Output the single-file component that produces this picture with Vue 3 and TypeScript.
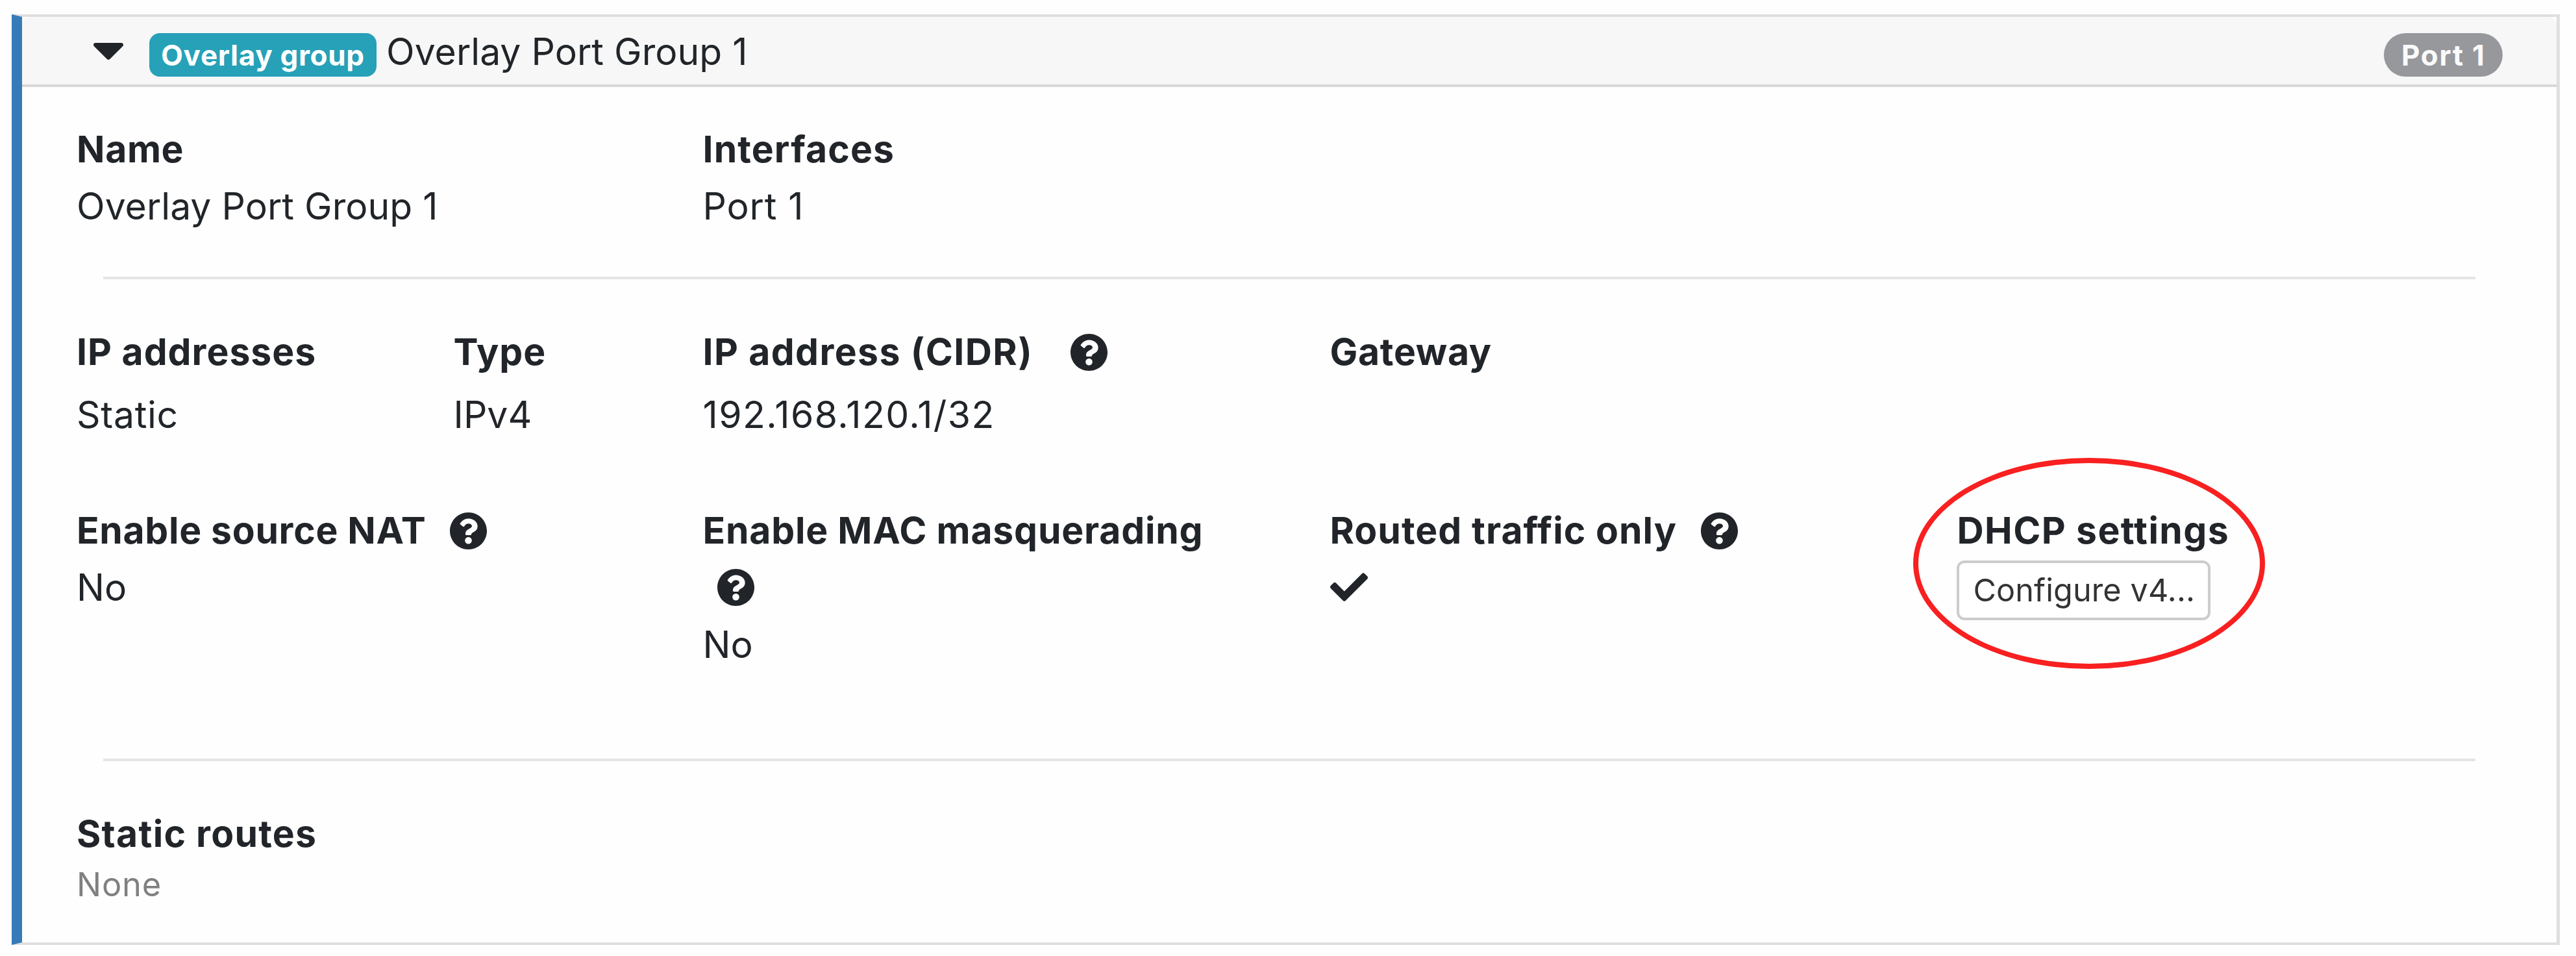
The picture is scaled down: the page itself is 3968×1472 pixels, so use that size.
<script setup lang="ts">
interface Field {
  label: string
  labelTracking: number
  value?: string
  valueTracking?: number
  help?: 'wide' | 'near' | 'below'
  kind?: 'check' | 'button'
}

const identity: Field[] = [
  { label: 'Name', labelTracking: 0.68, value: 'Overlay Port Group 1', valueTracking: 0.05 },
  { label: 'Interfaces', labelTracking: 1.14, value: 'Port 1', valueTracking: 0.9 },
]

const addressing: Field[] = [
  { label: 'IP addresses', labelTracking: 1.03, value: 'Static', valueTracking: 0.71 },
  { label: 'Type', labelTracking: 0.99, value: 'IPv4', valueTracking: 0.08 },
  { label: 'IP address (CIDR)', labelTracking: 1.43, value: '192.168.120.1/32', valueTracking: 1.49, help: 'wide' },
  { label: 'Gateway', labelTracking: 0.75 },
]

const options: Field[] = [
  { label: 'Enable source NAT', labelTracking: 0.72, value: 'No', valueTracking: 0.06, help: 'near' },
  { label: 'Enable MAC masquerading', labelTracking: 0.83, value: 'No', valueTracking: 0.06, help: 'below' },
  { label: 'Routed traffic only', labelTracking: 1.08, help: 'near', kind: 'check' },
  { label: 'DHCP settings', labelTracking: 1.44, value: 'Configure v4...', kind: 'button' },
]

const rows = [
  { name: 'identity', fields: identity },
  { name: 'addressing', fields: addressing },
  { name: 'options', fields: options },
]

const track = (n?: number) => ({ letterSpacing: `${n ?? 0}px` })

const helpPath =
  'M504 256c0 136.997-111.043 248-248 248S8 392.997 8 256C8 119.083 119.043 8 256 8s248 111.083 248 248zM262.655 90c-54.497 0-89.255 22.957-116.549 63.758-3.536 5.286-2.353 12.415 2.715 16.258l34.699 26.31c5.205 3.947 12.621 3.008 16.665-2.122 17.864-22.658 30.113-35.797 57.303-35.797 20.429 0 45.698 13.148 45.698 32.958 0 14.976-12.363 22.667-32.534 33.976C247.128 238.528 216 254.941 216 296v4c0 6.627 5.373 12 12 12h56c6.627 0 12-5.373 12-12v-1.333c0-28.462 83.186-29.647 83.186-106.667 0-58.002-60.165-102-116.531-102zM256 338c-25.365 0-46 20.635-46 46 0 25.364 20.635 46 46 46s46-20.636 46-46c0-25.365-20.635-46-46-46z'
</script>

<template>
  <main class="page">
    <section class="card">
      <header class="card-header">
        <svg class="caret" viewBox="11.4 192 297.2 168.6" preserveAspectRatio="none">
          <path d="M31.3 192h257.3c17.8 0 26.7 21.5 14.1 34.1L174.1 354.7c-7.8 7.8-20.5 7.8-28.3 0L17.2 226.1C4.6 213.5 13.5 192 31.3 192z" />
        </svg>
        <span class="badge">Overlay group</span>
        <span class="title">Overlay Port Group 1</span>
        <span class="pill">Port 1</span>
      </header>

      <div class="card-body">
        <template v-for="row in rows" :key="row.name">
          <div class="row" :class="row.name">
            <div v-for="f in row.fields" :key="f.label" class="field">
              <div class="label" :class="f.help">
                <span :style="track(f.labelTracking)">{{ f.label }}</span>
                <svg v-if="f.help" class="help" viewBox="8 8 496 496"><path :d="helpPath" /></svg>
              </div>
              <div v-if="f.kind === 'check'" class="value">
                <svg class="check" viewBox="0 65 512 382">
                  <path d="M173.898 439.404l-166.4-166.4c-9.997-9.997-9.997-26.206 0-36.204l36.203-36.204c9.997-9.998 26.207-9.998 36.204 0L192 312.69 432.095 72.596c9.997-9.997 26.207-9.997 36.204 0l36.203 36.204c9.997 9.997 9.997 26.206 0 36.204l-294.4 294.401c-9.998 9.997-26.207 9.997-36.204-.001z" />
                </svg>
              </div>
              <template v-else-if="f.kind === 'button'">
                <button class="configure" type="button">{{ f.value }}</button>
                <span class="ring"></span>
              </template>
              <div v-else-if="f.value" class="value" :style="track(f.valueTracking)">{{ f.value }}</div>
            </div>
          </div>
          <hr v-if="row.name !== 'addressing'" class="rule" />
        </template>

        <div class="routes">
          <div class="label"><span :style="track(1.3)">Static routes</span></div>
          <div class="none">None</div>
        </div>
      </div>
    </section>
  </main>
</template>

<style>
body {
  background: #fefefe;
}
</style>

<style scoped>
.page {
  box-sizing: border-box;
  width: 3968px;
  height: 1472px;
  padding: 22px 25px 17px 18px;
  background: #fefefe;
  color: #212529;
  font-family: Inter, "Liberation Sans", sans-serif;
  font-size: 57px;
  line-height: 88px;
  white-space: nowrap;
  overflow: hidden;
}

.page svg {
  display: block;
  flex: none;
  fill: currentColor;
}

.card {
  box-sizing: border-box;
  height: 1433px;
  border: solid #dfdfdf;
  border-width: 4px 5px 4px 16px;
  border-left-color: #367bb7;
}

.card-header {
  display: flex;
  align-items: flex-start;
  height: 104px;
  padding: 0 83px 0 110px;
  border-bottom: 4px solid #d8d8d8;
  border-radius: 10px 10px 0 0;
  background: #f7f7f7;
}

.caret {
  width: 46px;
  height: 26px;
  margin: 40px 40px 0 0;
}

.badge,
.pill {
  box-sizing: border-box;
  height: 67px;
  margin-top: 25px;
  padding-top: 1px;
  color: #fff;
  font-size: 44px;
  font-weight: 700;
  line-height: 66px;
}

.badge {
  width: 350px;
  padding-left: 18px;
  border-radius: 16px;
  background: #26a1b8;
  letter-spacing: 0.7px;
}

.title {
  margin: 10px 0 0 15px;
  letter-spacing: 0.05px;
}

.pill {
  width: 183px;
  margin-left: auto;
  padding-left: 27px;
  border-radius: 34px;
  background: #96989b;
  color: #fafafa;
  letter-spacing: 1.7px;
}

.card-body {
  padding: 52px 0 0 84px;
}

.row {
  display: grid;
  grid-template-columns: 964.5px 966px 966px 1fr;
  align-items: start;
}

.identity {
  height: 240px;
}

.addressing {
  grid-template-columns: 580.5px 384px 966px 1fr;
  height: 275px;
  padding-top: 68px;
}

.addressing .value {
  margin-top: 9px;
}

.options {
  height: 395px;
}

.field {
  position: relative;
}

.label {
  display: flex;
  align-items: center;
  min-height: 88px;
  font-weight: 700;
}

.help {
  width: 57px;
  height: 57px;
  margin-left: 37px;
}

.wide .help {
  margin-left: 58px;
}

.below {
  flex-direction: column;
  align-items: flex-start;
}

.below .help {
  margin: 15px 0 16px 22px;
}

.value {
  height: 88px;
}

.check {
  width: 58px;
  height: 44px;
  padding-top: 21px;
}

.configure {
  display: block;
  box-sizing: border-box;
  width: 391px;
  height: 92px;
  margin: 2px 0 0 -1px;
  padding: 0 0 0 22px;
  border: 4px solid #ccc;
  border-radius: 12px;
  background: #fff;
  color: #333;
  font-family: inherit;
  font-size: 48.5px;
  line-height: 84px;
  letter-spacing: 0.14px;
  text-align: left;
}

/* Highlight drawn over the DHCP settings cell */
.ring {
  position: absolute;
  top: -68px;
  left: -68px;
  box-sizing: border-box;
  width: 542px;
  height: 325px;
  border: 8px solid #f82020;
  border-radius: 50%;
  pointer-events: none;
}

.rule {
  width: 3654px;
  height: 4px;
  margin: 0 0 0 41px;
  border: 0;
  background: #e5e5e5;
}

.routes {
  padding-top: 68px;
}

.none {
  color: #808080;
  font-size: 50.5px;
  line-height: 67px;
  letter-spacing: 0.85px;
}
</style>
